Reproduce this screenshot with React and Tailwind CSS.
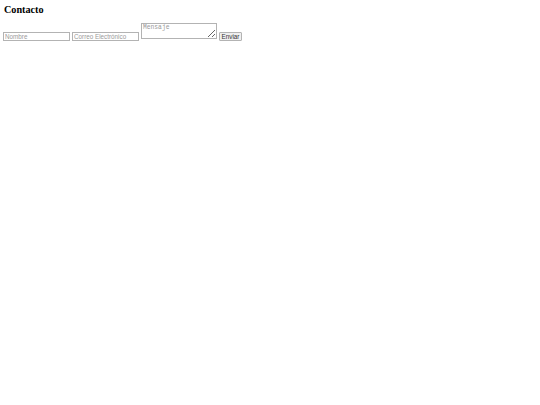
export default function App() {
  return (
    <div className="min-h-[405px] w-[540px] bg-white px-[3px] pt-[4px]">
      <h2 className="pl-[1px] text-[10.2px] leading-[11px] font-bold text-black" style={{ fontFamily: '"Liberation Serif", serif' }}>
        Contacto
      </h2>
      <form className="mt-[8px] flex items-end gap-[2px]" style={{ fontFamily: '"Liberation Sans", sans-serif' }}>
        <input
          placeholder="Nombre"
          className="h-[9px] w-[67px] border border-[#b3b3b3] px-[1px] text-[6.3px] leading-[7px] placeholder:text-[#9a9a9a] outline-none"
        />
        <input
          placeholder="Correo Electrónico"
          className="h-[9px] w-[67px] border border-[#b3b3b3] px-[1px] text-[6.3px] leading-[7px] placeholder:text-[#9a9a9a] outline-none"
        />
        <textarea
          placeholder="Mensaje"
          className="mb-[2px] h-[16px] w-[76px] border border-[#b3b3b3] px-[1px] text-[6.3px] leading-[7px] placeholder:text-[#9a9a9a] outline-none"
          style={{ fontFamily: '"Liberation Mono", monospace' }}
        />
        <button
          type="button"
          className="h-[9px] w-[23px] rounded-[1px] border border-[#b3b3b3] bg-[#efefef] text-[6.3px] leading-[7px] text-[#333]"
        >
          Enviar
        </button>
      </form>
    </div>
  );
}
